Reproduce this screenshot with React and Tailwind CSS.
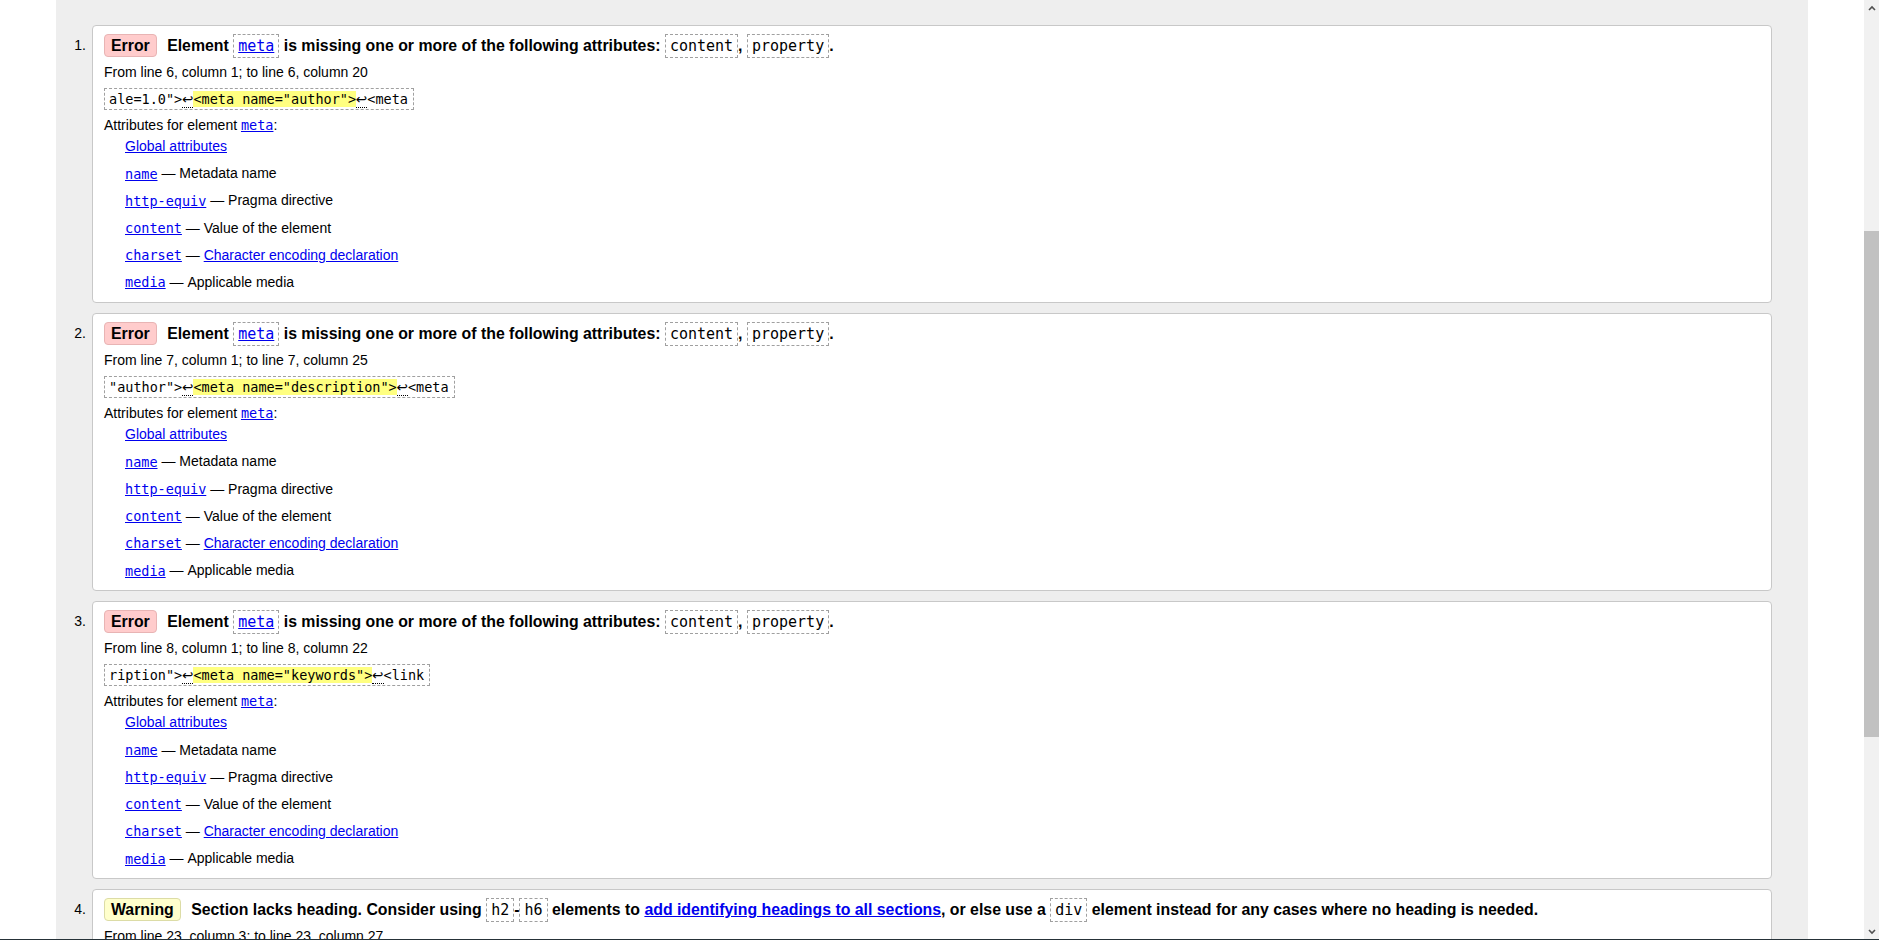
import React from 'react';

const sans = "font-['Liberation_Sans',Arial,sans-serif]";
const mono = "font-['DejaVu_Sans_Mono','Liberation_Mono',monospace]";

const errors = [
  { n: 1, from: 'From line 6, column 1; to line 6, column 20', pre: 'ale=1.0">', hl: '<meta name="author">', post: '<meta' },
  { n: 2, from: 'From line 7, column 1; to line 7, column 25', pre: '"author">', hl: '<meta name="description">', post: '<meta' },
  { n: 3, from: 'From line 8, column 1; to line 8, column 22', pre: 'ription">', hl: '<meta name="keywords">', post: '<link' },
];

const attrs = [
  { code: 'name', desc: 'Metadata name' },
  { code: 'http-equiv', desc: 'Pragma directive' },
  { code: 'content', desc: 'Value of the element' },
  { code: 'charset', desc: 'Character encoding declaration', link: true },
  { code: 'media', desc: 'Applicable media' },
];

// dashed code box used inside the message line
const Code = ({ children, link }) => (
  <span className={`inline-block border border-dashed border-[#a0a0a0] px-[4px] leading-[22px] text-[15px] font-normal ${mono}`}>
    {link ? <a className="text-[#0000ee] underline">{children}</a> : children}
  </span>
);

const Badge = ({ kind }) =>
  kind === 'error' ? (
    <span className="inline-block rounded-[4px] border border-[#e8b4b4] bg-[#ffcccc] px-[6px] leading-[21px] mr-[6px]">Error</span>
  ) : (
    <span className="inline-block rounded-[4px] border border-[#dcdca6] bg-[#ffffcc] px-[6px] leading-[21px] mr-[6px]">Warning</span>
  );

const Ret = () => (
  <span className="border-b border-dotted border-black font-['DejaVu_Sans',sans-serif]">↩</span>
);

const Row = ({ n, children }) => (
  <div className="flex shrink-0">
    <div className={`w-[36px] shrink-0 pr-[6px] pt-[8px] text-right text-[14px] leading-[24px] text-black ${sans}`}>{n}.</div>
    <div className={`flex-1 rounded-[4px] border border-[#c8c8c8] bg-white pl-[11px] pt-[8px] pb-[6px] text-black ${sans}`}>
      {children}
    </div>
  </div>
);

const ErrorCard = ({ e }) => (
  <Row n={e.n}>
    <div className="text-[15.85px] font-bold leading-[24px] h-[24px] whitespace-nowrap">
      <Badge kind="error" /> Element <Code link>meta</Code> is missing one or more of the following attributes:{' '}
      <Code>content</Code>, <Code>property</Code>.
    </div>
    <div className="mt-[6px] text-[14px] leading-[16px]">{e.from}</div>
    <div className="mt-[7px] h-[22px]">
      <span className={`inline-block border border-dashed border-[#a0a0a0] py-[2px] pl-[4px] pr-[5px] text-[13.5px] leading-[16px] whitespace-pre ${mono}`}>
        {e.pre}
        <Ret />
        <span className="bg-[#ffff80]">{e.hl}</span>
        <Ret />
        {e.post}
      </span>
    </div>
    <div className="mt-[8px] text-[14px] leading-[16px]">
      Attributes for element <a className={`text-[#0000ee] underline text-[13.5px] ${mono}`}>meta</a>:
    </div>
    <div className="pl-[21px] text-[14px]">
      <div className="flex h-[27.2px] items-center">
        <a className="text-[#0000ee] underline">Global attributes</a>
      </div>
      {attrs.map((a) => (
        <div key={a.code} className="flex h-[27.2px] items-center whitespace-pre">
          <a className={`text-[#0000ee] underline text-[13.5px] ${mono}`}>{a.code}</a>
          <span> — </span>
          {a.link ? <a className="text-[#0000ee] underline">{a.desc}</a> : <span>{a.desc}</span>}
        </div>
      ))}
    </div>
  </Row>
);

export default function App() {
  return (
    <div className="flex h-[940px] w-full flex-col overflow-hidden bg-white">
      <div className="flex min-h-0 flex-1">
        <div className="min-w-0 flex-1 px-[56px]">
          <div className="flex h-full flex-col gap-[10px] overflow-hidden bg-[#eeeeee] pt-[25px] pr-[36px]">
            {errors.map((e) => (
              <ErrorCard key={e.n} e={e} />
            ))}
            <Row n={4}>
              <div className="text-[15.85px] font-bold leading-[24px] h-[24px] whitespace-nowrap">
                <Badge kind="warning" /> Section lacks heading. Consider using <Code>h2</Code>-<Code>h6</Code> elements to{' '}
                <a className="text-[#0000ee] underline">add identifying headings to all sections</a>, or else use a <Code>div</Code>{' '}
                element instead for any cases where no heading is needed.
              </div>
              <div className="mt-[6px] text-[14px] leading-[16px]">From line 23, column 3; to line 23, column 27</div>
            </Row>
          </div>
        </div>
        {/* scrollbar */}
        <div className="flex w-[15px] shrink-0 flex-col bg-[#f1f1f1]">
          <div className="flex h-[15px] items-center justify-center">
            <svg width="8" height="6" viewBox="0 0 8 6"><path d="M1 5 L4 2 L7 5" stroke="#505050" strokeWidth="1.6" fill="none" /></svg>
          </div>
          <div className="mt-[216px] h-[506px] bg-[#c1c1c1]" />
          <div className="flex-1" />
          <div className="flex h-[15px] items-center justify-center">
            <svg width="8" height="6" viewBox="0 0 8 6"><path d="M1 1 L4 4 L7 1" stroke="#505050" strokeWidth="1.6" fill="none" /></svg>
          </div>
        </div>
      </div>
      <div className="h-px shrink-0 bg-[#263238]" />
    </div>
  );
}
